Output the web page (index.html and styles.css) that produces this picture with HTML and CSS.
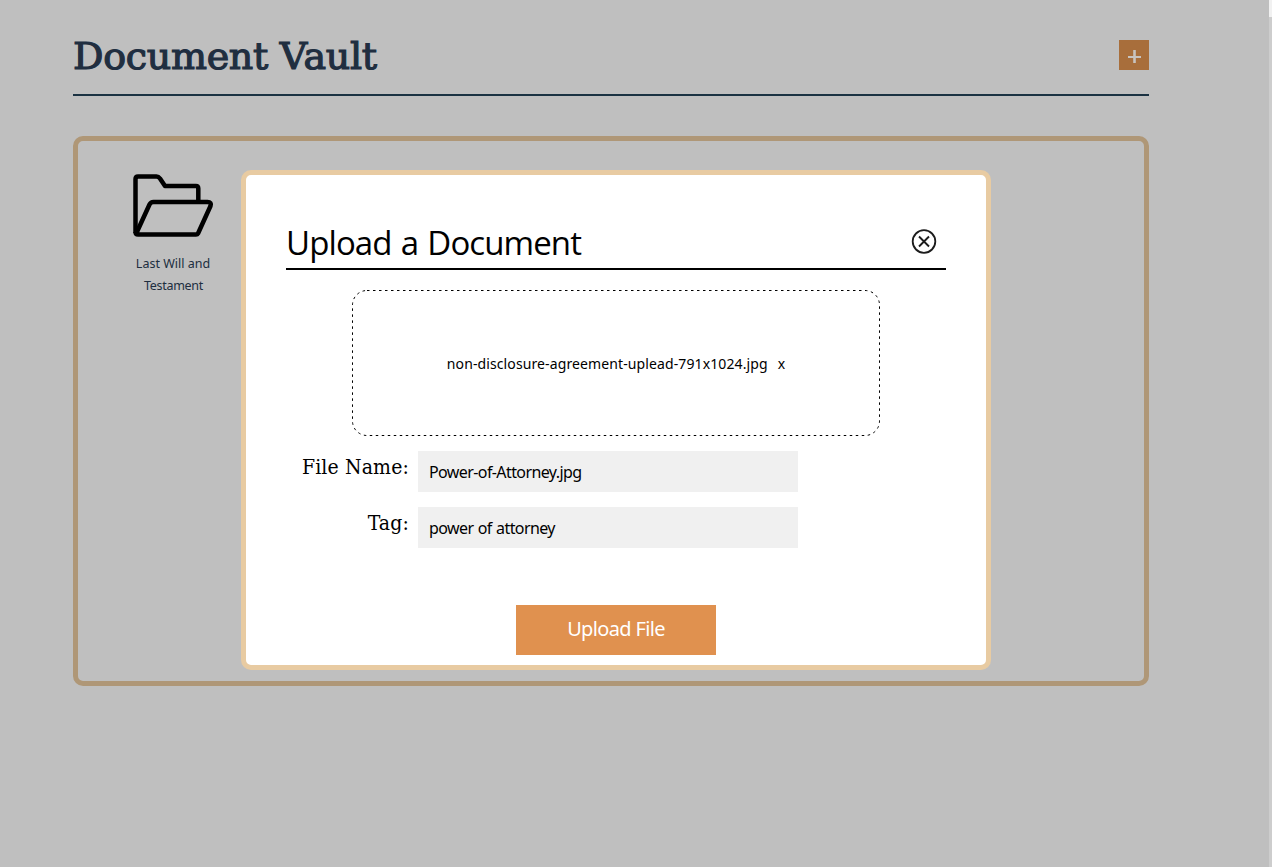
FILE: index.html
```html
<!DOCTYPE html>
<html lang="en">
<head>
<meta charset="utf-8">
<title>Document Vault</title>
<link rel="stylesheet" href="styles.css">
</head>
<body>
<main class="page">
  <header class="page-header">
    <h1 class="page-title">Document Vault</h1>
    <button class="add-button" aria-label="Add document">
      <svg width="30" height="30" viewBox="0 0 30 30" fill="none" stroke="#c8c4c0"><path d="M9 17h13" stroke-width="2"/><path d="M15.500 10v13" stroke-width="2.600"/></svg>
    </button>
  </header>
  <section class="vault">
    <div class="folder">
      <svg class="folder-icon" width="82" height="64" viewBox="0 0 82 64" fill="none" stroke="#000" stroke-width="4.500" stroke-linejoin="round"><path d="M2.500 59V5Q2.500 2.500 5 2.500H23.500Q25.500 2.500 27 4.500L32 12H63Q65.300 12 65.300 14.500V28"/><path d="M3 60L16.500 30.500Q17.700 28 20.500 28H74.500Q79 28 77.500 32L65 59.500Q64.500 60.500 63 60.500H5Q2.500 60.500 2.500 58"/></svg>
      <p class="folder-name">Last Will and<br><span class="name-second">Testament</span></p>
    </div>
  </section>
</main>
<div class="scroll-strip"></div>
<div class="overlay">
  <section class="modal" role="dialog" aria-label="Upload a Document">
    <header class="modal-header">
      <h2 class="modal-title">Upload a Document</h2>
      <svg class="close-icon" width="26" height="26" viewBox="0 0 26 26" fill="none" stroke="#1c1c1c"><circle cx="13" cy="13.500" r="11.300" stroke-width="1.800"/><path d="M8 8.500l10 10M18 8.500L8 18.500" stroke-width="1.900"/></svg>
    </header>
    <div class="dropzone">
      <svg class="dropzone-outline" width="528" height="146" viewBox="0 0 528 146"><rect x=".5" y=".5" width="527" height="145" rx="14.500" fill="none" stroke="#000" stroke-dasharray="2.500 3.500"/></svg>
      <span class="file">non-disclosure-agreement-uplead-791x1024.jpg</span><span class="remove">x</span>
    </div>
    <div class="field"><label class="label">File Name:</label><div class="input">Power-of-Attorney.jpg</div></div>
    <div class="field"><label class="label">Tag:</label><div class="input">power of attorney</div></div>
    <button class="upload">Upload File</button>
  </section>
</div>
</body>
</html>
```
FILE: styles.css
```css
* { box-sizing: border-box; }
body { margin: 0; height: 867px; overflow: hidden; background: #bfbfbf; font-family: "Noto Sans", sans-serif; color: #000; }
h1, h2, p { margin: 0; font-weight: 400; }
button { border: 0; padding: 0; font: inherit; }
.page { width: 1149px; padding: 15px 0 0 73px; }
.page-header { height: 81px; display: flex; justify-content: space-between; align-items: center; border-bottom: 2px solid #1b3242; }
.page-title { font: 400 38px/78px "DejaVu Serif", serif; letter-spacing: -0.3px; color: #202e40; -webkit-text-stroke: 1.2px #202e40; white-space: nowrap; padding-top: 3px; }
.add-button { width: 30px; height: 30px; background: #a86e3b; }
.add-button svg { display: block; }
.vault { height: 550px; margin-top: 40px; border: 5px solid #af9777; border-radius: 10px; padding: 33px 0 0 35px; }
.folder { width: 120px; text-align: center; }
.folder-icon { display: block; margin-left: 20px; }
.folder-name { font-size: 12.5px; line-height: 22px; color: #202e40; margin-top: 15px; white-space: nowrap; }
.name-second { letter-spacing: -0.3px; padding-left: 1px; }
.scroll-strip { position: absolute; right: 0; top: 0; bottom: 0; width: 3px; background: #cdcdcd; border-top: 17px solid #f1f1f1; }
.overlay { position: absolute; left: 241px; top: 170px; }
.modal { width: 750px; height: 500px; padding: 45px 40px 0; background: #fff; border: 5px solid #e8cba2; border-radius: 10px; display: flex; flex-direction: column; }
.modal-header { height: 50px; border-bottom: 2px solid #000; display: flex; align-items: center; justify-content: space-between; padding: 0 9px 7px 0; }
.modal-title { font: 400 33px/44px "Open Sans", sans-serif; letter-spacing: -0.9px; word-spacing: 1.5px; padding-top: 4px; white-space: nowrap; }
.dropzone { position: relative; width: 528px; height: 146px; margin: 20px auto 15px; display: flex; align-items: center; justify-content: center; font-size: 14px; letter-spacing: 0.11px; gap: 10px; white-space: nowrap; }
.dropzone-outline { position: absolute; inset: 0; }
.field { display: flex; height: 41px; margin-bottom: 15px; }
.label { width: 123px; margin-right: 9px; text-align: right; font: 400 21px/32px "DejaVu Serif Condensed", "DejaVu Serif", serif; font-stretch: condensed; letter-spacing: 0.15px; white-space: nowrap; }
.input { width: 380px; background: #f0f0f0; padding-left: 11px; font: 16px/42px "Noto Sans", sans-serif; letter-spacing: -0.6px; word-spacing: 0.8px; white-space: nowrap; }
.upload { width: 200px; height: 50px; margin: 42px auto 0; background: #e0914f; color: #fff; font-size: 20px; line-height: 46px; padding-bottom: 2px; letter-spacing: -0.65px; }
```
